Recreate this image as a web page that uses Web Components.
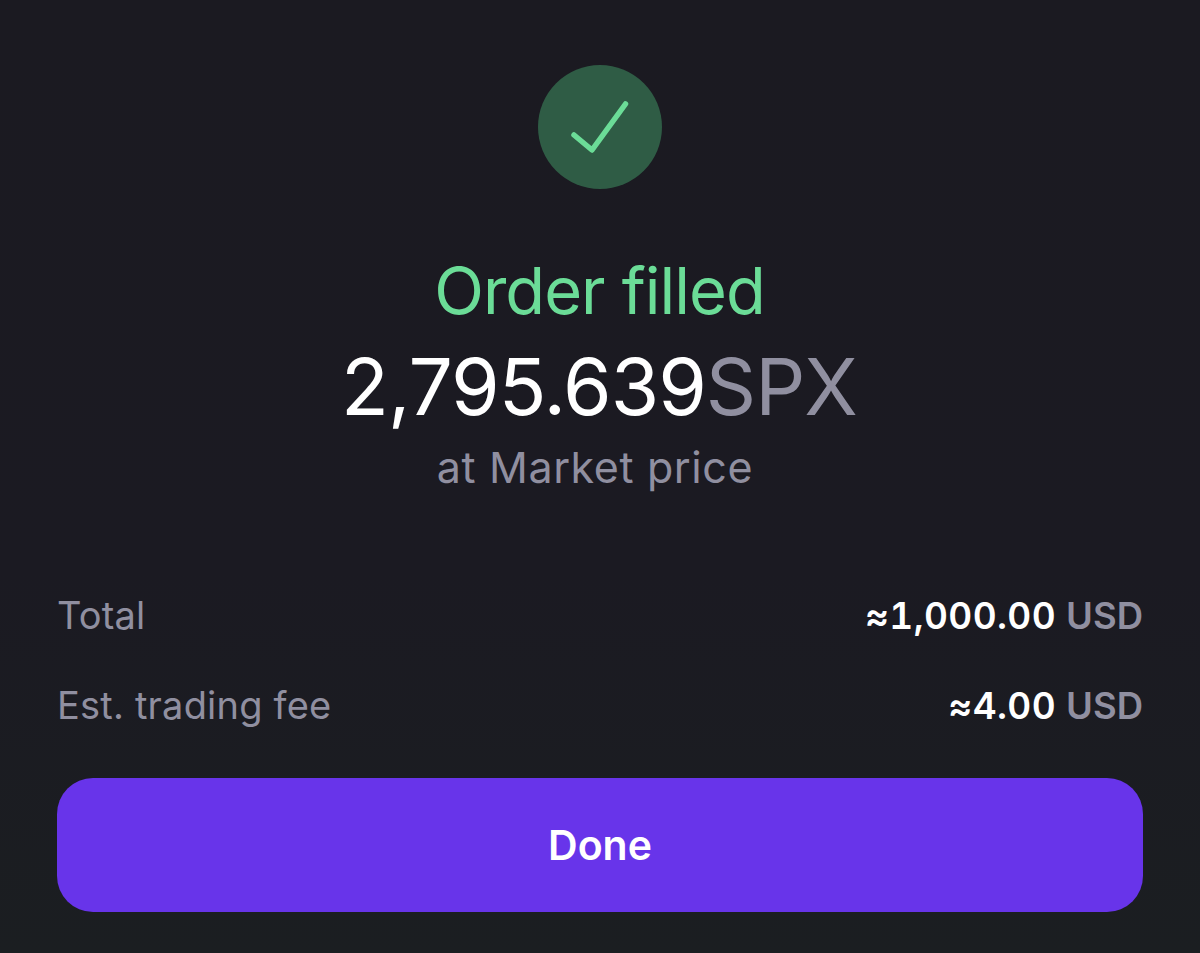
<!DOCTYPE html>
<html>
<head>
<meta charset="utf-8">
<title>Order filled</title>
<style>
html, body { margin: 0; height: 100%; }
body { background: linear-gradient(180deg, #1b1a21 0%, #1b1a22 60%, #1b1e21 100%); font-family: Inter, "Liberation Sans", sans-serif; overflow: hidden; }
</style>
</head>
<body>
<order-result>
    <check-badge></check-badge>
    <span slot="title">Order filled</span>
    <span slot="amount">2,795.639</span>
    <span slot="unit">SPX</span>
    <span slot="note">at Market price</span>
    <summary-row slot="rows" label="Total" value="≈1,000.00" unit="USD"></summary-row>
    <summary-row slot="rows" label="Est. trading fee" value="≈4.00" unit="USD"></summary-row>
    <done-button slot="action">Done</done-button>
</order-result>
<script>
class CheckBadge extends HTMLElement {
    constructor() {
        super();
        this.attachShadow({mode: "open"});
        this.shadowRoot.innerHTML = `
            <style>
            :host { display: block; width: 124px; height: 124px; border-radius: 50%; background: #2f5c45; }
            svg { display: block; }
            </style>
            <svg width="124" height="124" viewBox="0 0 124 124" fill="none">
                <path d="M36 70 L54 85 L87.5 39" stroke="#6bdc97" stroke-width="5.5" stroke-linecap="round" stroke-linejoin="round"/>
            </svg>
        `;
    }
}
customElements.define("check-badge", CheckBadge);

class SummaryRow extends HTMLElement {
    constructor() {
        super();
        this.attachShadow({mode: "open"});
    }
    connectedCallback() {
        this.shadowRoot.innerHTML = `
            <style>
            :host { display: flex; justify-content: space-between; align-items: center; height: 44px; font-size: 38px; letter-spacing: .2px; color: #908fa0; }
            .value { font-weight: 600; font-size: 37px; color: #fff; letter-spacing: .4px; font-feature-settings: "tnum"; }
            .unit { font-weight: 600; font-size: 36.5px; letter-spacing: 0; color: #908fa0; margin-left: 10px; }
            </style>
            <span>${this.getAttribute("label")}</span>
            <span><span class="value">${this.getAttribute("value")}</span><span class="unit">${this.getAttribute("unit")}</span></span>
        `;
    }
}
customElements.define("summary-row", SummaryRow);

class DoneButton extends HTMLElement {
    constructor() {
        super();
        this.attachShadow({mode: "open"});
        this.shadowRoot.innerHTML = `
            <style>
            :host { display: flex; align-items: center; justify-content: center; height: 134px; border-radius: 36px; background: #6834ea; color: #fff; font-size: 41px; font-weight: 600; }
            </style>
            <slot></slot>
        `;
    }
}
customElements.define("done-button", DoneButton);

class OrderResult extends HTMLElement {
    constructor() {
        super();
        this.attachShadow({mode: "open"});
        this.shadowRoot.innerHTML = `
            <style>
            :host { display: flex; flex-direction: column; box-sizing: border-box; height: 953px; padding: 65px 57px 0 57px; }
            .top { display: flex; flex-direction: column; align-items: center; }
            .title { margin-top: 62px; height: 80px; line-height: 80px; font-size: 65px; color: #6bdc97; letter-spacing: -1px; padding-right: 1px; }
            .amount { margin-top: 14px; height: 84px; line-height: 84px; font-size: 78.5px; color: #fff; letter-spacing: -1px; white-space: nowrap; padding-right: 2px; }
            .unit { color: #908fa0; }
            .note { margin-top: 12px; height: 52px; line-height: 52px; font-size: 43px; color: #908fa0; letter-spacing: .6px; padding-right: 10px; }
            .rows { margin-top: 100px; display: flex; flex-direction: column; gap: 46px; }
            .action { margin-top: 51px; }
            </style>
            <div class="top">
                <slot></slot>
                <div class="title"><slot name="title"></slot></div>
                <div class="amount"><slot name="amount"></slot><span class="unit"><slot name="unit"></slot></span></div>
                <div class="note"><slot name="note"></slot></div>
            </div>
            <div class="rows"><slot name="rows"></slot></div>
            <div class="action"><slot name="action"></slot></div>
        `;
    }
}
customElements.define("order-result", OrderResult);
</script>
</body>
</html>
